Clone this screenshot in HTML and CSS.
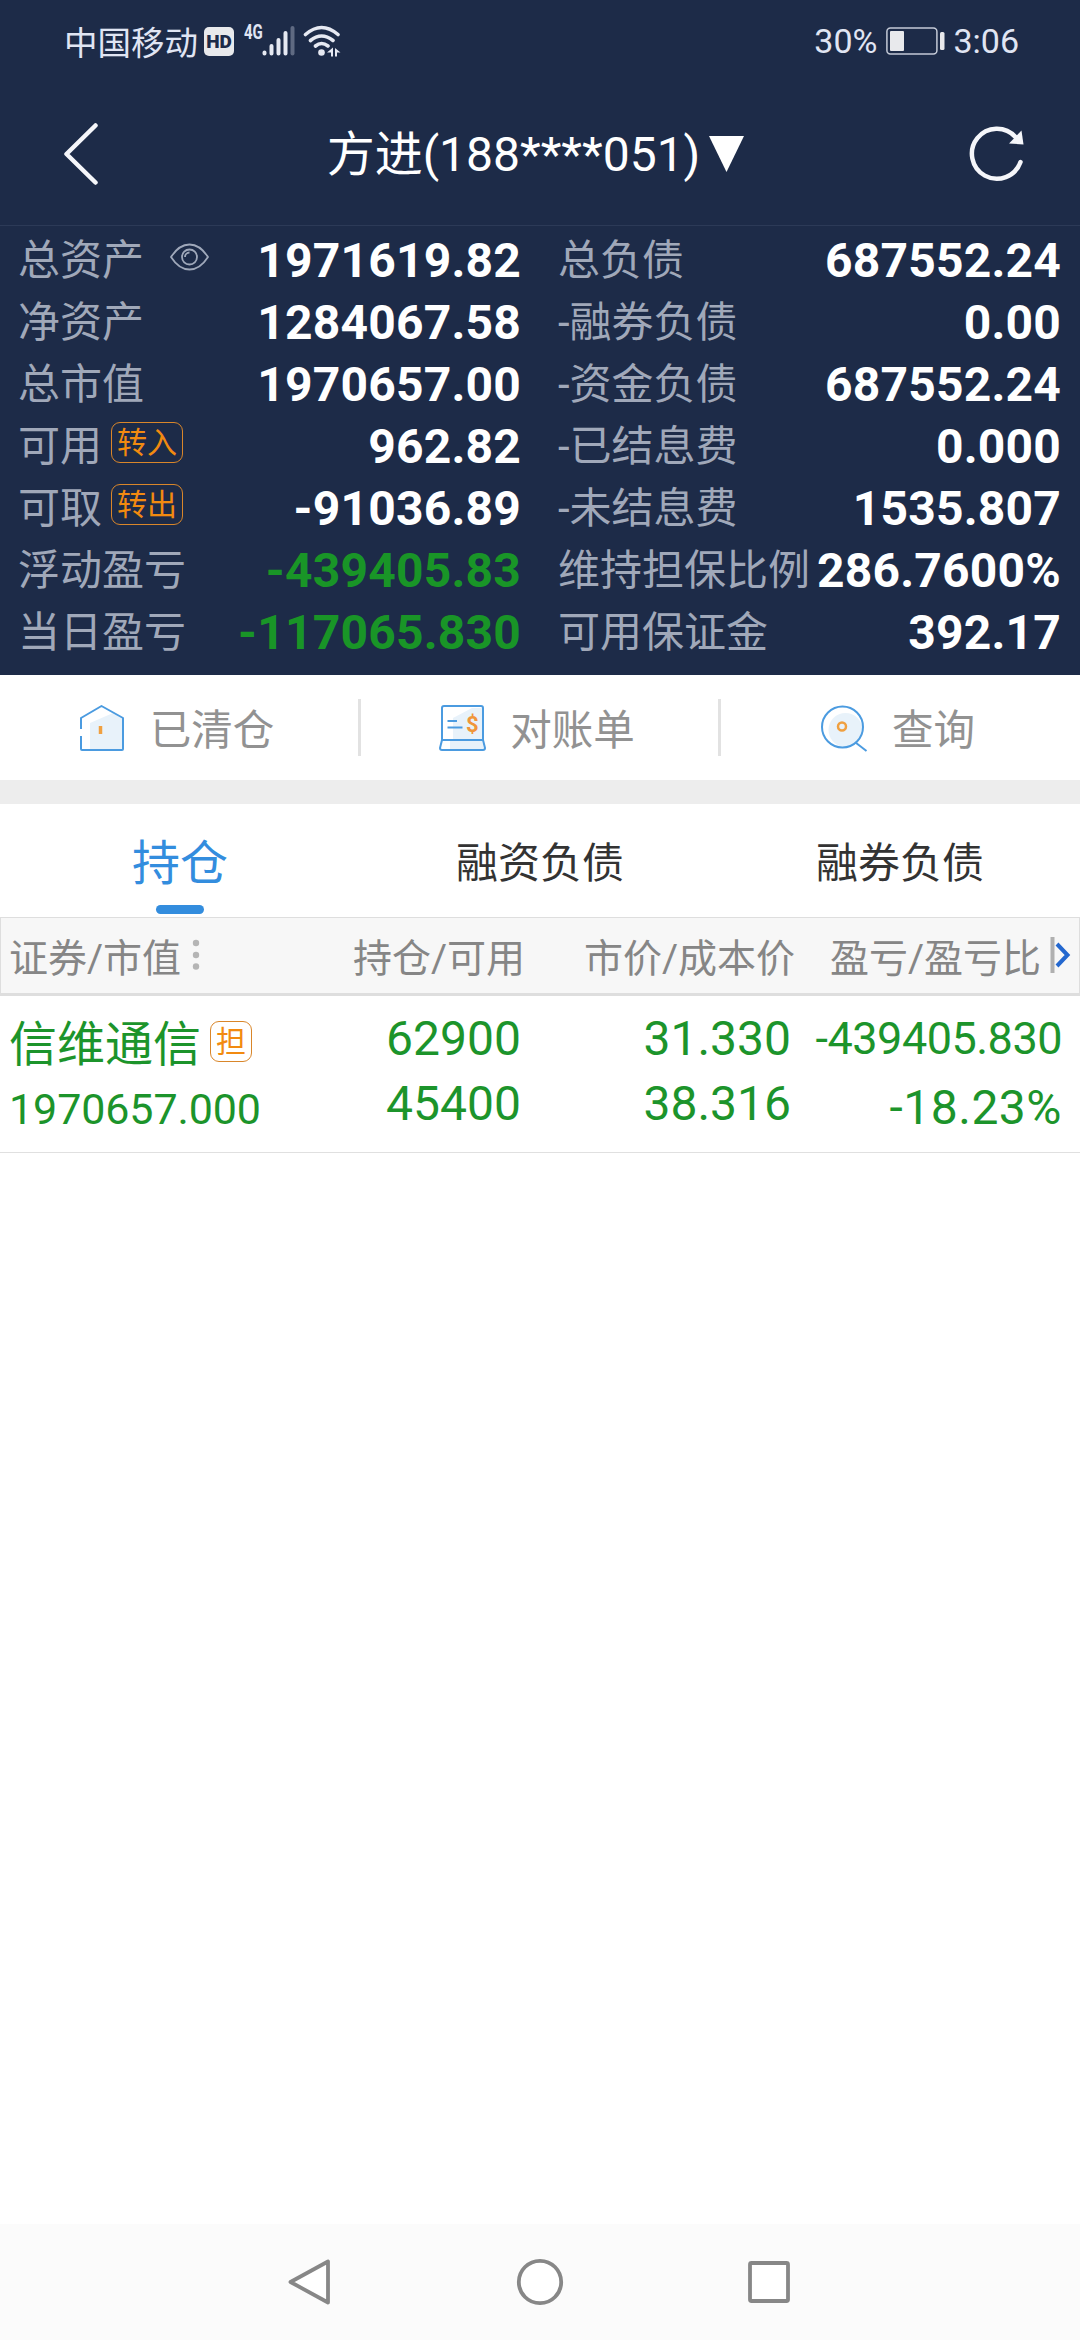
FILE: index.html
```html
<!DOCTYPE html>
<html lang="zh-CN">

<head>
    <meta charset="UTF-8">
    <meta name="viewport" content="width=device-width, initial-scale=1">
    <title>信用持仓</title>
    <link rel="stylesheet" href="styles.css">
</head>

<body>

    <div class="top">
        <!-- Status bar -->
        <div class="status-bar">
            <div class="status-left">
                <span class="carrier">中国移动</span>
                <span class="hd">HD</span>
                <span class="network">4G</span>
                <svg class="signal" width="33" height="32" viewBox="0 0 33 32" stroke="#e6e9f2" stroke-width="4" stroke-linecap="round">
                    <path d="M2.500 27.500v1M9.500 21v7.500M16.500 15v13.500M23.500 8v20.500"/>
                    <path d="M30.500 3v25.500" stroke="#5f6a82"/>
                </svg>
                <svg class="wifi" width="38" height="32" viewBox="0 0 38 32" fill="none" stroke="#e6e9f2" stroke-width="3.600" stroke-linecap="round">
                    <path d="M2.500 9.500Q18.500-4.500 35 9.500M7.500 15.500Q18.500 6.500 30 15.500M12.500 21Q18.500 16 25 21"/>
                    <circle cx="18.500" cy="27.500" r="3.300" fill="#e6e9f2" stroke="none"/>
                    <path d="M24 27.500l6-5v9h-2v-4zM32 23l5.500 4.500h-3.500v4h-2z" fill="#e6e9f2" stroke="none"/>
                </svg>
            </div>
            <div class="status-right">
                <span>30%</span>
                <svg class="battery" width="59" height="28" viewBox="0 0 59 28">
                    <rect x=".9" y=".9" width="50" height="26" rx="3.500" fill="none" stroke="#c3c9d6" stroke-width="1.500"/>
                    <rect x="4" y="4" width="14" height="20" rx="1" fill="#e8e9ec"/>
                    <rect x="54" y="5" width="4.500" height="18" rx="1.500" fill="#e8e9ec"/>
                </svg>
                <span>3:06</span>
            </div>
        </div>

        <!-- Title bar -->
        <div class="title-bar">
            <svg class="back" width="36" height="62" viewBox="0 0 36 62" fill="none" stroke="#f5f6fa" stroke-width="4.500" stroke-linecap="round" stroke-linejoin="round">
                <path d="M32.500 2.500L3.500 31l29 28.500"/>
            </svg>
            <div class="account">
                <span>方进(188****051)</span>
                <svg width="35" height="36" viewBox="0 0 35 36"><path d="M0 0h35L17.500 36z" fill="#fff"/></svg>
            </div>
            <svg class="refresh" width="56" height="56" viewBox="0 0 56 56" fill="none" stroke="#f5f6fa" stroke-width="4.500" stroke-linecap="round">
                <path d="M51.500 36A25 25 0 1 1 46.500 11"/>
                <path d="M52.500 4.500L54.500 18.500L40 17.500z" fill="#f5f6fa" stroke="none"/>
            </svg>
        </div>

        <!-- Assets -->
        <div class="assets">
            <div class="asset-col">
                <div class="asset"><span class="label">总资产</span>
                    <svg class="eye" width="39" height="28" viewBox="0 0 39 28" fill="none" stroke="#9fa8ba" stroke-width="1.800">
                        <path d="M1 14Q9 1.500 19.500 1.500T38 14Q30 26.500 19.500 26.500T1 14z"/>
                        <circle cx="19.500" cy="14" r="7.500"/>
                        <path d="M15 14a4.500 4.500 0 0 1 4.500-4.500"/>
                    </svg>
                    <b>1971619.82</b></div>
                <div class="asset"><span class="label">净资产</span><b>1284067.58</b></div>
                <div class="asset"><span class="label">总市值</span><b>1970657.00</b></div>
                <div class="asset"><span class="label">可用</span><span class="tag">转入</span><b>962.82</b></div>
                <div class="asset"><span class="label">可取</span><span class="tag">转出</span><b>-91036.89</b></div>
                <div class="asset"><span class="label">浮动盈亏</span><b class="down">-439405.83</b></div>
                <div class="asset"><span class="label">当日盈亏</span><b class="down">-117065.830</b></div>
            </div>
            <div class="asset-col">
                <div class="asset"><span class="label">总负债</span><b>687552.24</b></div>
                <div class="asset"><span class="label">-融券负债</span><b>0.00</b></div>
                <div class="asset"><span class="label">-资金负债</span><b>687552.24</b></div>
                <div class="asset"><span class="label">-已结息费</span><b>0.000</b></div>
                <div class="asset"><span class="label">-未结息费</span><b>1535.807</b></div>
                <div class="asset"><span class="label">维持担保比例</span><b>286.7600%</b></div>
                <div class="asset"><span class="label">可用保证金</span><b>392.17</b></div>
            </div>
        </div>
    </div>

    <!-- Shortcuts -->
    <div class="shortcuts">
        <div class="shortcut">
            <svg width="48" height="48" viewBox="0 0 48 48" fill="none" stroke="#4b9be0" stroke-width="2" stroke-linejoin="round">
                <path d="M12 45V19L35 9l9 6v30z" fill="#e8f2fa" stroke="none"/>
                <path d="M3 25V14L23.500 2 45 14v31q0 1-1 1H4q-1 0-1-1V32"/>
                <path d="M22.500 22v8" stroke="#f0a040" stroke-width="3.500"/>
            </svg>
            <span>已清仓</span>
        </div>
        <div class="shortcut">
            <svg width="48" height="48" viewBox="0 0 48 48" fill="none" stroke="#4b9be0" stroke-width="2" stroke-linejoin="round">
                <path d="M15 36V14L34 4h10v32zM12 45v-8h32l2 8z" fill="#e8f2fa" stroke="none"/>
                <path d="M4 36V4q0-2 2-2h37q2 0 2 2v32M4 36h41l2 8q0 2-2 2H4q-2 0-2-2z"/>
                <path d="M9.500 17h9.500M9.500 23.500h15"/>
                <text x="28" y="28" class="dollar">$</text>
            </svg>
            <span>对账单</span>
        </div>
        <div class="shortcut">
            <svg width="48" height="48" viewBox="0 0 48 48" fill="none" stroke="#4b9be0" stroke-width="2">
                <circle cx="25.500" cy="26" r="17" fill="#e8f2fa" stroke="none"/>
                <circle cx="22.500" cy="23" r="20.500"/>
                <path d="M35.500 38.500L46.500 47"/>
                <circle cx="22" cy="22.500" r="4" stroke="#f0a040" stroke-width="2.500"/>
            </svg>
            <span>查询</span>
        </div>
    </div>

    <!-- Tabs -->
    <div class="tabs">
        <div class="tab active">持仓</div>
        <div class="tab">融资负债</div>
        <div class="tab">融券负债</div>
    </div>

    <!-- Positions -->
    <div class="table-head">
        <span class="col-name">证券/市值
            <svg width="8" height="32" viewBox="0 0 8 32" fill="#b5b5b5"><circle cx="4" cy="4" r="3.200"/><circle cx="4" cy="16" r="3.200"/><circle cx="4" cy="27.500" r="3.200"/></svg>
        </span>
        <span class="col-amount">持仓/可用</span>
        <span class="col-price">市价/成本价</span>
        <span class="col-profit">盈亏/盈亏比</span>
        <svg class="more" width="22" height="38" viewBox="0 0 22 38" fill="none">
            <path d="M2.500 1v36" stroke="#b0b0b0" stroke-width="4"/>
            <path d="M7 8L17.500 19 7 30" stroke="#2468cf" stroke-width="4"/>
        </svg>
    </div>
    <div class="position">
        <div class="col-name">
            <div class="stock">信维通信<span class="tag">担</span></div>
            <div class="market-value">1970657.000</div>
        </div>
        <div class="col-amount">
            <div>62900</div>
            <div>45400</div>
        </div>
        <div class="col-price">
            <div>31.330</div>
            <div>38.316</div>
        </div>
        <div class="col-profit">
            <div class="profit">-439405.830</div>
            <div class="ratio">-18.23%</div>
        </div>
    </div>

    <!-- System navigation -->
    <div class="nav-bar">
        <svg width="48" height="48" viewBox="0 0 48 48"><path d="M41 3.500v41L3.500 24z"/></svg>
        <svg width="48" height="48" viewBox="0 0 48 48"><circle cx="24" cy="24" r="21.200"/></svg>
        <svg width="48" height="48" viewBox="0 0 48 48"><rect x="5" y="5" width="38" height="38" rx="1.500"/></svg>
    </div>

</body>

</html>
```
FILE: styles.css
```css
body {
    margin: 0;
    width: 1080px;
    height: 2340px;
    display: flex;
    flex-direction: column;
    overflow: hidden;
    background-color: #fff;
    font-family: Roboto, "Noto Sans CJK SC", sans-serif;
}

svg {
    display: block;
    flex: none;
}

.top {
    height: 675px;
    background-color: #1d2b48;
    color: #fff;
}

/* Status bar */
.status-bar {
    height: 82px;
    padding: 0 61px 0 64px;
    display: flex;
    justify-content: space-between;
    align-items: center;
    color: #e0e5f3;
}

.status-left,
.status-right {
    display: flex;
    align-items: center;
}

.carrier {
    padding-bottom: 2px;
    font-size: 33.5px;
}

.hd {
    width: 30px;
    height: 29px;
    margin-left: 6px;
    border-radius: 5px;
    background-color: #e8e9ec;
    color: #1d2b48;
    font-size: 19px;
    line-height: 30px;
    font-weight: 900;
    text-align: center;
}

.network {
    width: 18px;
    margin: 0 0 18px 10px;
    font-size: 20px;
    line-height: 18px;
    font-weight: bold;
    transform: scaleX(0.75);
    transform-origin: left;
    white-space: nowrap;
}

.wifi {
    margin-left: 8px;
}

.status-right {
    font-size: 34px;
}

.battery {
    margin: 0 8px 0 9px;
}

/* Title bar */
.title-bar {
    height: 143px;
    padding: 0 55px 0 63px;
    display: flex;
    justify-content: space-between;
    align-items: center;
    border-bottom: 1px solid #2c3a57;
}

.account {
    display: flex;
    align-items: center;
    gap: 9px;
    padding: 2px 0 0 3px;
    font-size: 48px;
    line-height: 60px;
}

.account span {
    padding-top: 1px;
}

.account svg {
    margin-bottom: 2px;
}

/* Assets */
.assets {
    display: grid;
    grid-template-columns: 540px 540px;
    padding-top: 4px;
}

.asset {
    height: 62px;
    padding: 0 19px 0 18px;
    display: flex;
    align-items: center;
}

.label {
    font-size: 42px;
    line-height: 62px;
    color: #a0a8b9;
    white-space: nowrap;
}

.asset b {
    margin-left: auto;
    font-size: 48px;
    line-height: 62px;
    letter-spacing: 0.2px;
}

.asset .down {
    color: #199527;
}

.eye {
    margin: 0 0 9px 26px;
}

.tag {
    box-sizing: border-box;
    height: 41px;
    padding: 0 5px;
    border: 1px solid #d9862a;
    border-radius: 9px;
    color: #f28a10;
    font-size: 30px;
    line-height: 40px;
}

.asset .tag {
    margin: 0 0 9px 9px;
}

/* Shortcuts */
.shortcuts {
    display: grid;
    grid-template-columns: repeat(3, 1fr);
    align-items: center;
    height: 105px;
    border-bottom: 24px solid #ededed;
}

.shortcut {
    display: flex;
    justify-content: center;
    align-items: center;
    gap: 24px;
    height: 57px;
    padding-right: 8px;
    font-size: 41.5px;
    color: #929292;
}

.shortcut span {
    padding-bottom: 2px;
}

.shortcut + .shortcut {
    margin-left: -2px;
    border-left: 3px solid #e2e2e2;
}

.shortcut:last-child {
    padding-right: 6px;
}

.dollar {
    font-size: 22px;
    font-weight: bold;
    fill: #f0963a;
    stroke: none;
}

/* Tabs */
.tabs {
    display: grid;
    grid-template-columns: repeat(3, 1fr);
    height: 113px;
}

.tab {
    position: relative;
    height: 113px;
    font-size: 42px;
    line-height: 120px;
    text-align: center;
    color: #333;
}

.tab.active {
    font-size: 48px;
    color: #338dde;
}

.tab.active::after {
    content: "";
    position: absolute;
    left: 156px;
    bottom: 3px;
    width: 48px;
    height: 9px;
    border-radius: 5px;
    background-color: #338dde;
}

/* Positions */
.table-head,
.position {
    box-sizing: border-box;
    display: grid;
}

.table-head {
    height: 79px;
    grid-template-columns: 250px 266px 270px 246px 1fr;
    padding: 0 0 2px 8px;
    border: 1px solid #dedede;
    border-bottom-width: 3px;
    align-items: center;
    background-color: #f7f7f7;
    color: #868686;
    font-size: 39px;
    white-space: nowrap;
}

.col-amount,
.col-price,
.col-profit {
    text-align: right;
}

.table-head .col-name {
    display: flex;
    align-items: center;
    gap: 11px;
}

.more {
    margin-left: 9px;
}

.position {
    height: 157px;
    grid-template-columns: 250px 262px 270px 271px 1fr;
    padding: 10px 0 0 9px;
    border-bottom: 1px solid #e0e0e0;
    color: #1c942b;
    font-size: 48px;
    line-height: 65px;
}

.position .col-name {
    padding-top: 6px;
    line-height: 65px;
}

.stock {
    display: flex;
    align-items: center;
    gap: 9px;
    white-space: nowrap;
}

.stock .tag {
    margin-bottom: 7px;
    line-height: 40px;
}

.market-value {
    font-size: 43px;
    letter-spacing: -0.1px;
}

.profit {
    font-size: 45px;
    letter-spacing: -0.5px;
}

.ratio {
    padding-top: 4px;
    letter-spacing: 0.5px;
}

/* System navigation */
.nav-bar {
    height: 116px;
    margin-top: auto;
    display: flex;
    justify-content: center;
    align-items: center;
    gap: 181px;
    background-color: #fbfbfb;
}

.nav-bar svg {
    fill: #fff;
    stroke: #878787;
    stroke-width: 3.8px;
    stroke-linejoin: round;
}
```
